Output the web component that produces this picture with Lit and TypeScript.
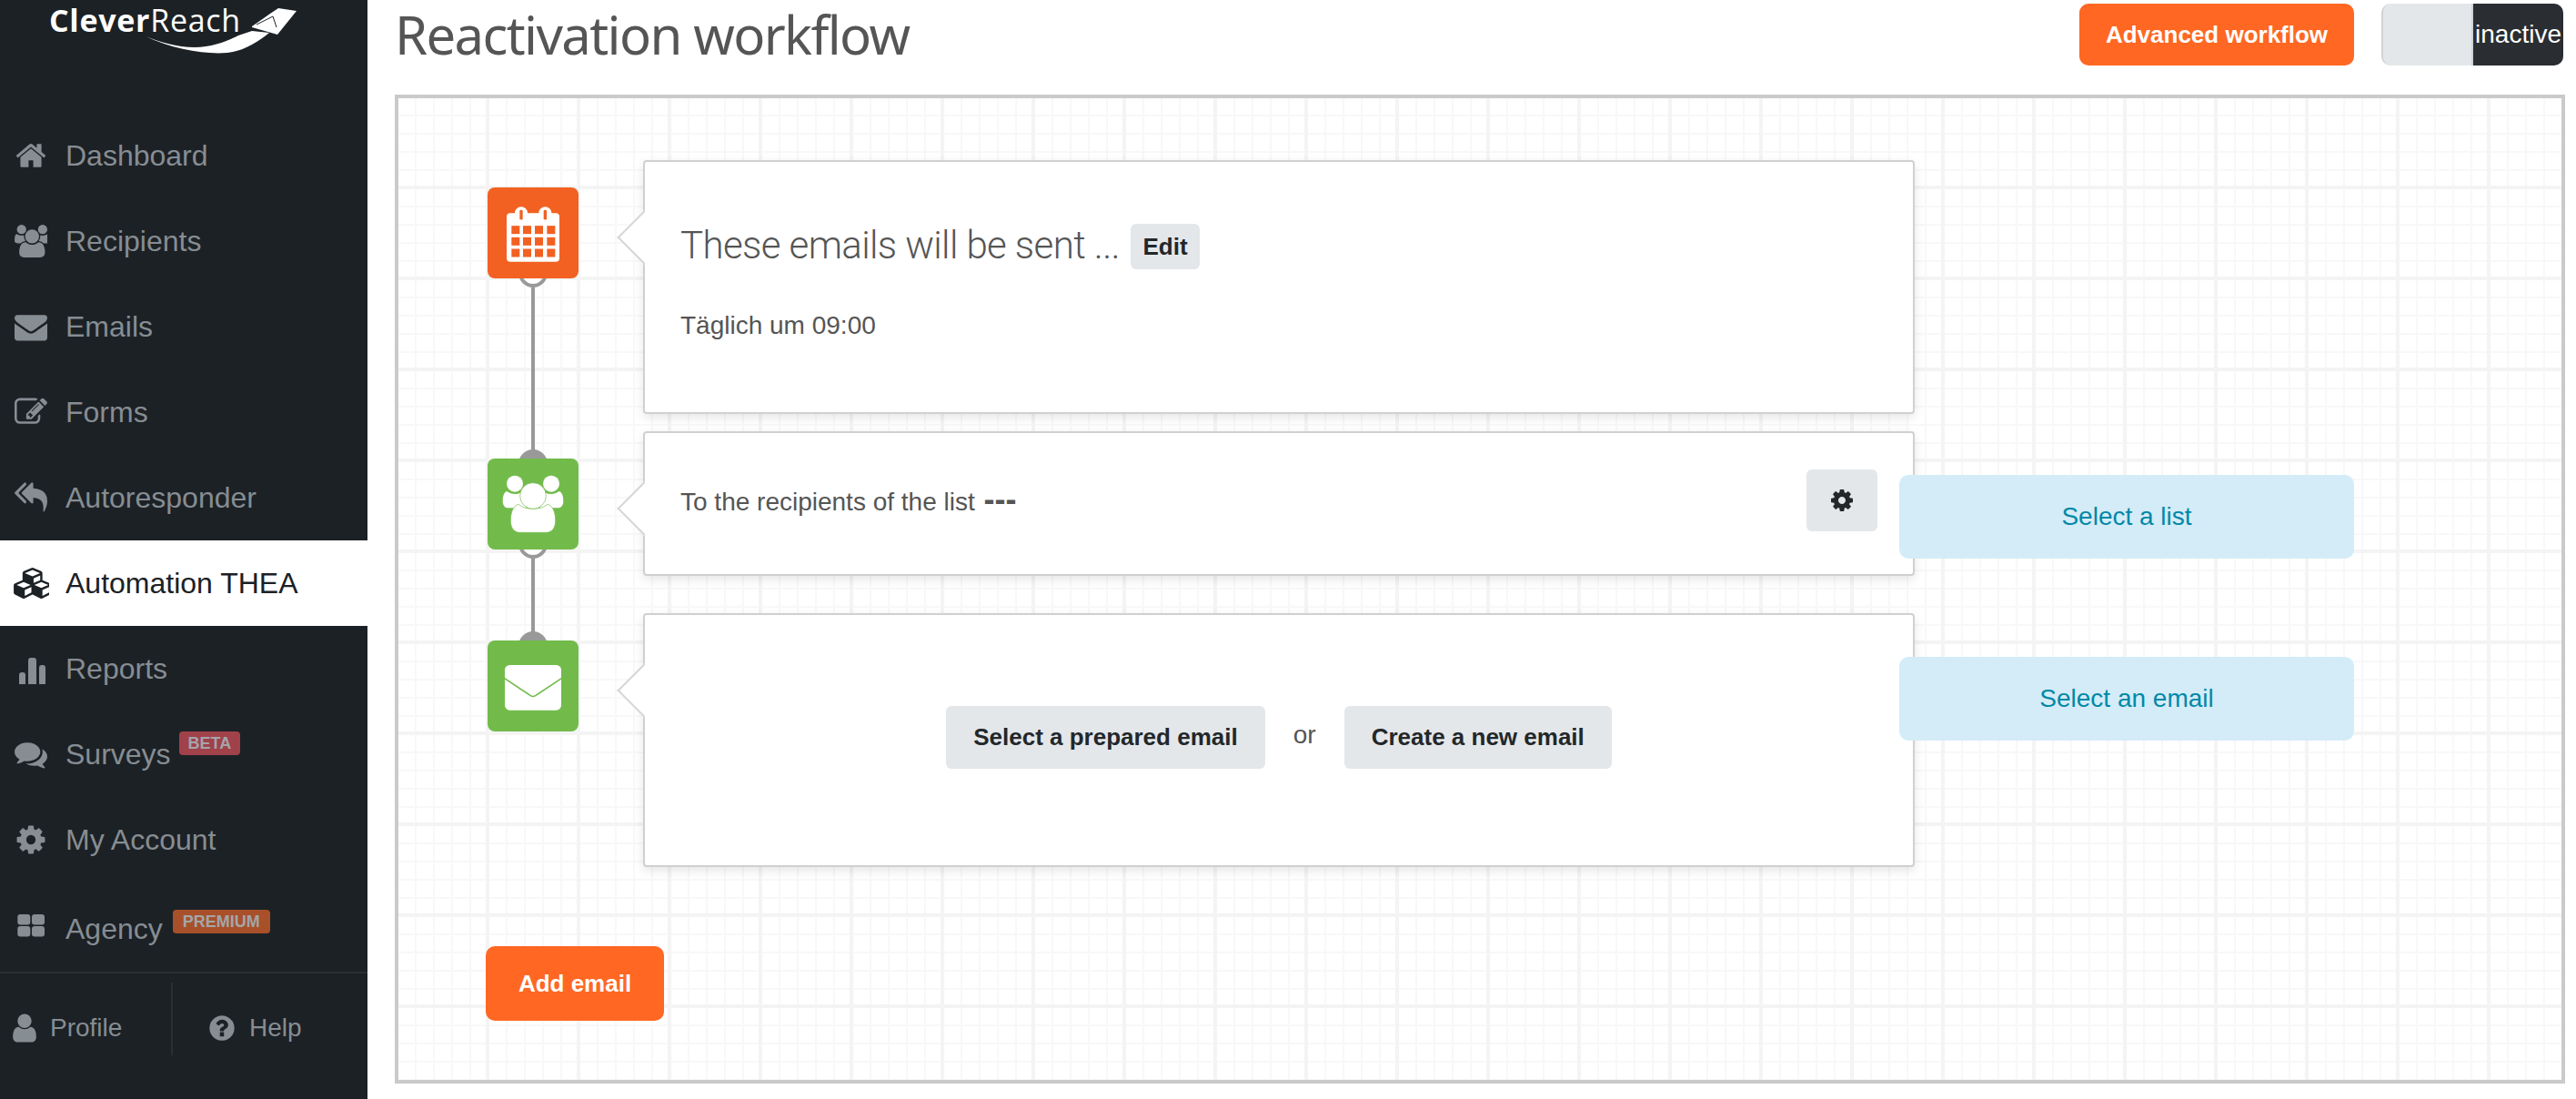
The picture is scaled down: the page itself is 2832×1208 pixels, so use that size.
import { LitElement, html, css, svg } from "lit";
import { customElement } from "lit/decorators.js";

const P: Record<string, string> = {
  home: "M1472 992v480q0 26-19 45t-45 19h-384v-384h-256v384h-384q-26 0-45-19t-19-45v-480q0-1 .5-3t.5-3l575-474 575 474q1 2 1 6zm223-69l-62 74q-8 9-21 11h-3q-13 0-21-7l-692-577-692 577q-12 8-24 7-13-2-21-11l-62-74q-8-10-7-23.500t11-21.500l719-599q32-26 76-26t76 26l244 204v-195q0-14 9-23t23-9h192q14 0 23 9t9 23v408l219 182q10 8 11 21.500t-7 23.500z",
  users: "M593 896q-162 5-265 128h-134q-82 0-138-40.500t-56-118.500q0-353 124-353 6 0 43.500 21t97.500 42.500 119 21.500q67 0 133-23-5 37-5 66 0 139 81 256zm1071 637q0 120-73 189.500t-194 69.500h-874q-121 0-194-69.500t-73-189.500q0-53 3.500-103.500t14-109 26.500-108.500 43-97.500 62-81 85.500-53.500 111.500-20q10 0 43 21.500t73 48 107 48 135 21.500 135-21.500 107-48 73-48 43-21.500q61 0 111.500 20t85.500 53.500 62 81 43 97.500 26.500 108.500 14 109 3.500 103.500zm-1024-1277q0 106-75 181t-181 75-181-75-75-181 75-181 181-75 181 75 75 181zm704 384q0 159-112.500 271.500t-271.500 112.500-271.500-112.500-112.500-271.500 112.500-271.500 271.500-112.500 271.500 112.500 112.500 271.500zm576 225q0 78-56 118.500t-138 40.500h-134q-103-123-265-128 81-117 81-256 0-29-5-66 66 23 133 23 59 0 119-21.500t97.500-42.500 43.500-21q124 0 124 353zm-128-609q0 106-75 181t-181 75-181-75-75-181 75-181 181-75 181 75 75 181z",
  envelope: "M1792 710v794q0 66-47 113t-113 47h-1472q-66 0-113-47t-47-113v-794q44 49 101 87 362 246 497 345 57 42 92.500 65.500t94.500 48 110 24.500h2q51 0 110-24.500t94.500-48 92.500-65.500q170-123 498-345 57-39 100-87zm0-294q0 79-49 151t-122 123q-376 261-468 325-10 7-42.500 30.500t-54 38-52 32.500-57.500 27-50 9h-2q-23 0-50-9t-57.500-27-52-32.500-54-38-42.500-30.500q-91-64-262-182.500t-205-142.500q-62-42-117-115.500t-55-136.500q0-78 41.500-130t118.500-52h1472q65 0 112.500 47t47.500 113z",
  edit: "M888 1184l116-116-152-152-116 116v56h96v96h56zm440-720q-16-16-33 1l-350 350q-17 17-1 33t33-1l350-350q17-17 1-33zm80 594v190q0 119-84.500 203.500t-203.500 84.500h-832q-119 0-203.500-84.500t-84.500-203.500v-832q0-119 84.500-203.500t203.500-84.500h832q63 0 117 25 15 7 18 23 3 17-9 29l-49 49q-14 14-32 8-23-6-45-6h-832q-66 0-113 47t-47 113v832q0 66 47 113t113 47h832q66 0 113-47t47-113v-126q0-13 9-22l64-64q15-15 35-7t20 29zm-96-738l288 288-672 672h-288v-288zm444 132l-92 92-288-288 92-92q28-28 68-28t68 28l152 152q28 28 28 68t-28 68z",
  reply: "M640 1082v70q0 42-39 59-13 5-25 5-27 0-45-19l-512-512q-19-19-19-45t19-45l512-512q29-31 70-14 39 17 39 59v69l-397 398q-19 19-19 45t19 45zm1152 38q0 58-17 133.500t-38.500 138-48 125-40.500 90.500l-20 40q-8 17-28 17-6 0-9-1-25-8-23-34 43-400-106-565-64-71-170.500-110.500t-267.500-52.500v251q0 42-39 59-13 5-25 5-27 0-45-19l-512-512q-19-19-19-45t19-45l512-512q29-31 70-14 39 17 39 59v262q411 28 599 221 169 173 169 509z",
  comments: "M1408 768q0 139-94 257t-256.500 186.500-353.500 68.500q-86 0-176-16-124 88-278 128-36 9-86 16h-3q-11 0-20.500-8t-11.500-21q-1-3-1-6.500t.5-6.500 2-6l2.500-5 3.500-5.500 4-5 4.500-5 4-4.500q5-6 23-25t26-29.500 22.500-29 25-38.500 20.500-44q-124-72-195-177t-71-224q0-139 94-257t256.500-186.500 353.500-68.500 353.500 68.500 256.500 186.500 94 257zm384 256q0 120-71 224.500t-195 176.500q10 24 20.500 44t25 38.500 22.500 29 26 29.500 23 25q1 1 4 4.500t4.500 5 4 5 3.500 5.500l2.500 5 2 6 .5 6.500-1 6.500q-3 14-13 22t-22 7q-50-7-86-16-154-40-278-128-90 16-176 16-271 0-472-132 58 4 88 4 161 0 309-45t264-129q125-92 192-212t67-254q0-77-23-152 129 71 204 178t75 230z",
  cog: "M1152 896q0-106-75-181t-181-75-181 75-75 181 75 181 181 75 181-75 75-181zm512-109v222q0 12-8 23t-20 13l-185 28q-19 54-39 91 35 50 107 138 10 12 10 25t-9 23q-27 37-99 108t-94 71q-12 0-26-9l-138-108q-44 23-91 38-16 136-29 186-7 28-36 28h-222q-14 0-24.500-8.500t-11.500-21.500l-28-184q-49-16-90-37l-141 107q-10 9-25 9-14 0-25-11-126-114-165-168-7-10-7-23 0-12 8-23 15-21 51-66.500t54-70.500q-27-50-41-99l-183-27q-13-2-21-12.500t-8-23.500v-222q0-12 8-23t19-13l186-28q14-46 39-92-40-57-107-138-10-12-10-24 0-10 9-23 26-36 98.500-107.500t94.500-71.500q13 0 26 10l138 107q44-23 91-38 16-136 29-186 7-28 36-28h222q14 0 24.500 8.500t11.500 21.500l28 184q49 16 90 37l142-107q9-9 24-9 13 0 25 10 129 119 165 170 7 8 7 22 0 12-8 23-15 21-51 66.500t-54 70.500q26 50 41 98l183 28q13 2 21 12.500t8 23.500z",
  user: "M1536 1399q0 109-62.500 187t-150.500 78h-854q-88 0-150.500-78t-62.500-187q0-85 8.500-160.500t31.500-152 58.500-131 94-89 134.500-34.500q131 128 313 128t313-128q76 0 134.500 34.500t94 89 58.500 131 31.500 152 8.500 160.500zm-256-887q0 159-112.500 271.500t-271.500 112.500-271.500-112.500-112.500-271.500 112.500-271.500 271.500-112.500 271.500 112.500 112.500 271.500z",
  help: "M1024 1376v-192q0-14-9-23t-23-9h-192q-14 0-23 9t-9 23v192q0 14 9 23t23 9h192q14 0 23-9t9-23zm256-672q0-88-55.500-163t-138.500-116-170-41q-243 0-371 213-15 24 8 42l132 100q7 6 19 6 16 0 25-12 53-68 86-92 34-24 86-24 48 0 85.500 26t37.500 59q0 38-20 61t-68 45q-63 28-115.500 86.500t-52.500 125.500v36q0 14 9 23t23 9h192q14 0 23-9t9-23q0-19 21.500-49.500t54.500-49.500q32-18 49-28.500t46-35 44.500-48 28-60.500 12.500-81zm384 192q0 209-103 385.500t-279.500 279.500-385.500 103-385.500-103-279.500-279.500-103-385.500 103-385.500 279.500-279.500 385.500-103 385.500 103 279.500 279.500 103 385.500z",
};

const fa = (n: string) => html`<svg class="fa" viewBox="0 0 1792 1792" fill="currentColor"><path d=${P[n]}></path></svg>`;

const bars = html`<svg class="fa" viewBox="0 0 36 36" fill="currentColor">
  <path d="M5 35V25a3 3 0 0 1 3-3h1a3 3 0 0 1 3 3v10zM15 35V9a3 3 0 0 1 3-3h3a3 3 0 0 1 3 3v26zM27 35V17a3 3 0 0 1 3-3h1a3 3 0 0 1 3 3v18z"></path></svg>`;

const grid4 = html`<svg class="fa" viewBox="0 0 36 36" fill="currentColor">
  <rect x="3.300" y="6" width="14" height="11.500" rx="3"></rect><rect x="19" y="6" width="14" height="11.500" rx="3"></rect>
  <rect x="3.300" y="19" width="14" height="11.500" rx="3"></rect><rect x="19" y="19" width="14" height="11.500" rx="3"></rect></svg>`;

const cubes = html`<svg class="cubes" viewBox="0 0 2048 1792" fill="currentColor"><path d="M640 1632l384-192v-314l-384 164v342zm-64-454l404-173-404-173-404 173zm1088 454l384-192v-314l-384 164v342zm-64-454l404-173-404-173-404 173zm-448-293l384-165v-266l-384 164v267zm-64-379l441-189-441-189-441 189zm1088 518v416q0 36-19 67t-52 47l-448 224q-25 14-57 14t-57-14l-448-224q-4-2-7-4-2 2-7 4l-448 224q-25 14-57 14t-57-14l-448-224q-33-16-52-47t-19-67v-416q0-38 21.500-70t56.500-48l434-186v-400q0-38 21.500-70t56.500-48l448-192q23-10 50-10t50 10l448 192q35 16 56.500 48t21.500 70v400l434 186q36 16 57 48t21 70z"></path></svg>`;

const calendar = html`<svg class="cal" viewBox="0 0 174 188">
  <path d="M12 27h15a21 21 0 0 1 42 0h37a21 21 0 0 1 42 0h14a12 12 0 0 1 12 12v137a12 12 0 0 1-12 12H12a12 12 0 0 1-12-12V39a12 12 0 0 1 12-12z" fill="#fff"></path>
  <rect x="43" y="17" width="10" height="32" rx="4" fill="#f26122"></rect><rect x="122" y="17" width="10" height="32" rx="4" fill="#f26122"></rect>
  ${[16, 54, 93, 133].flatMap((x) => [69, 107, 145].map((y) => svg`<rect x=${x} y=${y} width="27" height="27" fill="#f26122"></rect>`))}
</svg>`;

const people = html`<svg class="full" viewBox="0 0 300 300" fill="#fff">
  <circle cx="90" cy="83" r="27"></circle><circle cx="210" cy="83" r="27"></circle>
  <path d="M50 140c0-18 6-30 14-32 8 6 16 9 26 9 6 0 12-1 18-4l20 50H68c-10 0-18-8-18-23z"></path>
  <path d="M250 140c0-18-6-30-14-32-8 6-16 9-26 9-6 0-12-1-18-4l-20 50h60c10 0 18-8 18-23z"></path>
  <path d="M76 205c0-30 10-50 26-54 12 10 28 15 48 15s36-5 48-15c16 4 26 24 26 54 0 24-12 39-30 39h-88c-18 0-30-15-30-39z" stroke="#72bb4b" stroke-width="2"></path>
  <circle cx="150" cy="123" r="43" stroke="#72bb4b" stroke-width="2"></circle>
</svg>`;

const mail = html`<svg class="full" viewBox="0 0 300 300">
  <rect x="57" y="81" width="186" height="149" rx="16" fill="#fff"></rect>
  <path d="M55 124 L142 182 Q150 187 158 182 L245 124" fill="none" stroke="#72bb4b" stroke-width="5"></path>
</svg>`;

const nav = [
  { label: "Dashboard", icon: fa("home") },
  { label: "Recipients", icon: fa("users") },
  { label: "Emails", icon: fa("envelope") },
  { label: "Forms", icon: fa("edit") },
  { label: "Autoresponder", icon: fa("reply") },
  { label: "Automation THEA", icon: cubes, active: true },
  { label: "Reports", icon: bars },
  { label: "Surveys", icon: fa("comments"), badge: "BETA", cls: "beta" },
  { label: "My Account", icon: fa("cog") },
  { label: "Agency", icon: grid4, badge: "PREMIUM", cls: "premium" },
];

@customElement("app-root")
export class AppRoot extends LitElement {
  static styles = css`
    :host { display: block; width: 2832px; height: 1208px; overflow: hidden; background: #fff; font-family: "Liberation Sans", Arial, sans-serif; color: #555; }
    * { box-sizing: border-box; }
    .page { display: flex; height: 1208px; }
    aside { width: 404px; flex: none; background: #1c2125; color: #868d93; display: flex; flex-direction: column; }
    .logo { height: 124px; position: relative; flex: none; }
    .logo-text { position: absolute; left: 54px; top: 0; font: 400 34px/44px "Open Sans", sans-serif; color: #fff; letter-spacing: 0.7px; white-space: nowrap; }
    .logo-text b { font-weight: 700; }
    .logo svg { position: absolute; left: 0; top: 0; width: 404px; height: 124px; }
    .item { height: 94px; display: flex; align-items: center; padding-left: 16px; font-size: 32px; }
    .item.active { background: #fff; color: #1c2125; }
    .ico { width: 36px; height: 36px; margin-right: 20px; flex: none; display: flex; align-items: center; justify-content: center; }
    .fa { width: 36px; height: 36px; display: block; flex: none; }
    .cubes { width: 39px; height: 34px; flex: none; }
    .badge { align-self: flex-start; font-size: 18px; font-weight: 700; line-height: 26px; height: 26px; padding: 0 11px; border-radius: 4px; color: #a3a6a9; }
    .beta { background: #a1414a; margin: 22px 0 0 9px; padding: 0 10px; }
    .premium { background: #a8502a; margin: 30px 0 0 11px; }
    .lift { position: relative; top: 4px; }
    .foot { margin-top: 4px; flex: 1; border-top: 2px solid #2a2f33; display: flex; font-size: 28px; }
    .foot-a { width: 190px; height: 80px; margin-top: 10px; padding-top: 20px; border-right: 2px solid #2a2f33; display: flex; align-items: center; padding-left: 9px; gap: 10px; }
    .foot-b { height: 80px; margin-top: 10px; padding-top: 20px; display: flex; align-items: center; padding-left: 38px; gap: 14px; }
    .foot-b .fa { width: 32px; height: 32px; }

    main { flex: 1; padding: 0 12px 17px 30px; display: flex; flex-direction: column; min-width: 0; }
    header { height: 104px; flex: none; display: flex; align-items: flex-start; position: relative; }
    h1 { margin: 0; font: 400 58px/76px "Noto Sans", sans-serif; color: #555; letter-spacing: -1.6px; white-space: nowrap; flex: 1; }
    .btn { border: 0; border-radius: 10px; background: #ff6722; color: #fff; font: 700 26px "Liberation Sans", Arial, sans-serif; display: flex; align-items: center; justify-content: center; }
    .adv { width: 302px; height: 68px; margin-top: 4px; }
    .toggle { width: 200px; height: 68px; margin: 4px 2px 0 30px; border-radius: 10px; overflow: hidden; display: flex; background: #e3e7ea; border-left: 2px solid #cfd3d6; flex: none; }
    .toggle .off { width: 99px; border-right: 2px solid #cfd3d6; }
    .toggle .on { flex: 1; background: #2a2e32; color: #fff; font-size: 28px; display: flex; align-items: center; justify-content: center; }

    .canvas { flex: 1; border: 4px solid #cacaca; padding: 68px 0 0 96px;
      background-color: #fff;
      background-image:
        linear-gradient(to right, transparent 96px, #f4f4f4 96px, #f4f4f4 100px),
        linear-gradient(to bottom, transparent 96px, #f4f4f4 96px, #f4f4f4 100px),
        linear-gradient(to right, transparent 18px, #f8f8f8 18px, #f8f8f8 20px),
        linear-gradient(to bottom, transparent 18px, #f8f8f8 18px, #f8f8f8 20px);
      background-size: 100px 100px, 100px 100px, 20px 20px, 20px 20px;
    }
    .row { display: flex; align-items: flex-start; padding-left: 2px; }
    .r1 { margin-bottom: 19px; } .r2 { margin-bottom: 41px; } .r3 { margin-bottom: 87px; }
    .node { width: 100px; height: 130px; padding-top: 30px; position: relative; flex: none; }
    .face { position: relative; z-index: 2; width: 100px; height: 100px; border-radius: 8px; background: #72bb4b; display: flex; align-items: center; justify-content: center; }
    .face.orange { background: #f26122; }
    .cal { width: 58px; height: 63px; }
    .full { width: 100px; height: 100px; display: block; }
    .dome, .cup { position: absolute; left: 34px; width: 32px; height: 32px; border-radius: 50%; border: 4px solid #999; z-index: 1; }
    .dome { top: 20px; background: #999; }
    .cup { top: 108px; background: #fff; }
    .line { position: absolute; left: 48px; top: 140px; width: 4px; background: #999; z-index: 1; }
    .l1 { height: 180px; } .l2 { height: 82px; }
    .card { position: relative; margin-left: 71px; width: 1398px; background: #fff; border: 2px solid #d0d0d0; border-radius: 4px; box-shadow: 0 4px 12px rgba(0,0,0,.1); flex: none; }
    .card::before { content: ""; position: absolute; left: -22px; top: 62px; width: 40px; height: 40px; background: #fff; border-left: 2px solid #d6d6d6; border-bottom: 2px solid #d6d6d6; transform: rotate(45deg); }
    .c1 { height: 279px; padding: 68px 39px 0; }
    .c2 { height: 159px; padding: 0 39px 8px; display: flex; align-items: center; justify-content: space-between; font-size: 28px; }
    .c3 { height: 279px; padding-top: 100px; display: flex; justify-content: center; align-items: flex-start; font-size: 28px; }
    .c1 > * { position: relative; }
    .head { display: flex; align-items: center; gap: 12px; height: 50px; }
    .head span { position: relative; top: -2px; font: 300 42px "Roboto", sans-serif; letter-spacing: -0.6px; color: #555; white-space: nowrap; }
    .grey { border: 0; background: #e3e7ea; color: #23272a; font: 700 26px "Liberation Sans", Arial, sans-serif; border-radius: 6px; display: flex; align-items: center; justify-content: center; position: relative; }
    .edit { width: 76px; height: 50px; }
    .sub { margin-top: 42px; font-size: 28px; line-height: 40px; }
    .c2 > span { position: relative; top: 2px; }
    .c2 b { font-size: 36px; line-height: 0; margin-left: 2px; font-weight: 700; color: #555; }
    .gear { width: 78px; height: 68px; }
    .gear .fa { width: 28px; height: 28px; }
    .pick { height: 69px; padding: 0 30px; }
    .or { width: 87px; height: 64px; line-height: 64px; text-align: center; }
    .hint { position: relative; z-index: 3; margin: 48px 0 0 -17px; width: 500px; height: 92px; border-radius: 10px; background: #d4ecf7; color: #0088a8; font-size: 28px; display: flex; align-items: center; justify-content: center; flex: none; }
    .add { width: 196px; height: 82px; margin-left: 0; }
  `;

  private renderItem(n: any, i: number) {
    return html`<div class="item ${n.active ? "active" : ""}">
      <span class="ico">${n.icon}</span>
      <span class=${i === 9 ? "lift" : ""}>${n.label}</span>
      ${n.badge ? html`<span class="badge ${n.cls}">${n.badge}</span>` : ""}
    </div>`;
  }

  render() {
    return html`<div class="page">
      <aside>
        <div class="logo">
          <svg viewBox="0 0 404 124">
            <path d="M160 40 C190 54 225 60 250 58 C268 56 284 46 296 36 L277 34 L262 39 C262 39 238 52 214 52 C194 52 176 46 160 40Z" fill="#fff"></path>
            <path d="M277 29 L297 15 L306 9 L326 12 L305 38 L277 30Z" fill="#fff"></path>
            <path d="M282 27 L300 18 L304 30" fill="none" stroke="#1c2125" stroke-width="1"></path>
          </svg>
          <div class="logo-text"><b>Clever</b>Reach</div>
        </div>
        ${nav.map((n, i) => this.renderItem(n, i))}
        <div class="foot">
          <div class="foot-a">${fa("user")}<span>Profile</span></div>
          <div class="foot-b">${fa("help")}<span>Help</span></div>
        </div>
      </aside>
      <main>
        <header>
          <h1>Reactivation workflow</h1>
          <div class="btn adv">Advanced workflow</div>
          <div class="toggle"><div class="off"></div><div class="on">inactive</div></div>
        </header>
        <section class="canvas">
          <div class="row r1">
            <div class="node"><div class="face orange">${calendar}</div><div class="cup"></div><div class="line l1"></div></div>
            <div class="card c1">
              <div class="head"><span>These emails will be sent ...</span><div class="grey edit">Edit</div></div>
              <div class="sub">Täglich um 09:00</div>
            </div>
          </div>
          <div class="row r2">
            <div class="node"><div class="dome"></div><div class="face">${people}</div><div class="cup"></div><div class="line l2"></div></div>
            <div class="card c2">
              <span>To the recipients of the list <b>---</b></span>
              <div class="grey gear">${fa("cog")}</div>
            </div>
            <div class="hint">Select a list</div>
          </div>
          <div class="row r3">
            <div class="node"><div class="dome"></div><div class="face">${mail}</div></div>
            <div class="card c3">
              <div class="grey pick">Select a prepared email</div>
              <div class="or">or</div>
              <div class="grey pick">Create a new email</div>
            </div>
            <div class="hint">Select an email</div>
          </div>
          <div class="btn add">Add email</div>
        </section>
      </main>
    </div>`;
  }
}
